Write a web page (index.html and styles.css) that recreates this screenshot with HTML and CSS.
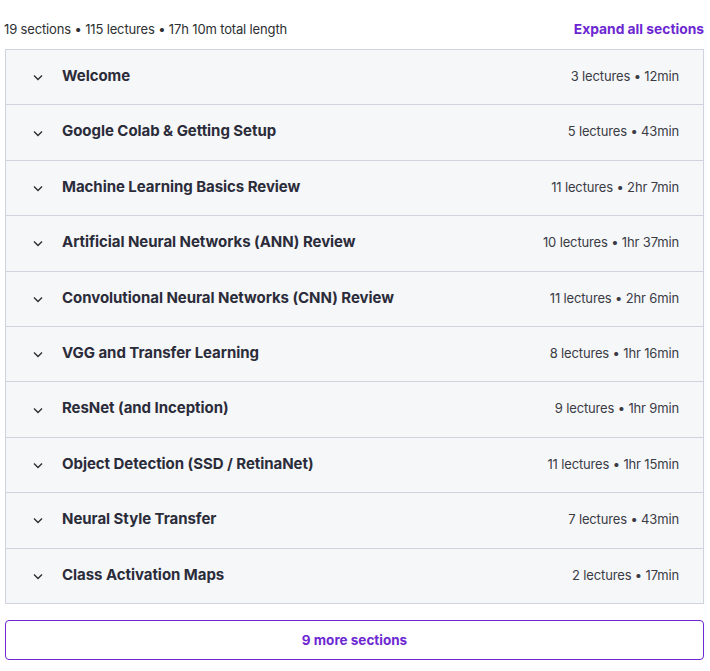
FILE: index.html
```html
<!DOCTYPE html>
<html lang="en">
<head>
<meta charset="utf-8">
<title>Course content</title>
<link rel="stylesheet" href="styles.css">
</head>
<body>
<div class="wrap">
  <div class="header">
    <span class="stats">19 sections • 115 lectures • 17h 10m total length</span>
    <button class="expand">Expand all sections</button>
  </div>
  <div class="panel">
    <div class="row"><svg class="chev" viewBox="0 0 16 16"><path d="M4 6.5l4 4 4-4" /></svg><span class="title">Welcome</span><span class="meta">3 lectures • 12min</span></div>
    <div class="row"><svg class="chev" viewBox="0 0 16 16"><path d="M4 6.5l4 4 4-4" /></svg><span class="title">Google Colab &amp; Getting Setup</span><span class="meta">5 lectures • 43min</span></div>
    <div class="row"><svg class="chev" viewBox="0 0 16 16"><path d="M4 6.5l4 4 4-4" /></svg><span class="title">Machine Learning Basics Review</span><span class="meta">11 lectures • 2hr 7min</span></div>
    <div class="row"><svg class="chev" viewBox="0 0 16 16"><path d="M4 6.5l4 4 4-4" /></svg><span class="title">Artificial Neural Networks (ANN) Review</span><span class="meta">10 lectures • 1hr 37min</span></div>
    <div class="row"><svg class="chev" viewBox="0 0 16 16"><path d="M4 6.5l4 4 4-4" /></svg><span class="title">Convolutional Neural Networks (CNN) Review</span><span class="meta">11 lectures • 2hr 6min</span></div>
    <div class="row"><svg class="chev" viewBox="0 0 16 16"><path d="M4 6.5l4 4 4-4" /></svg><span class="title">VGG and Transfer Learning</span><span class="meta">8 lectures • 1hr 16min</span></div>
    <div class="row"><svg class="chev" viewBox="0 0 16 16"><path d="M4 6.5l4 4 4-4" /></svg><span class="title">ResNet (and Inception)</span><span class="meta">9 lectures • 1hr 9min</span></div>
    <div class="row"><svg class="chev" viewBox="0 0 16 16"><path d="M4 6.5l4 4 4-4" /></svg><span class="title">Object Detection (SSD / RetinaNet)</span><span class="meta">11 lectures • 1hr 15min</span></div>
    <div class="row"><svg class="chev" viewBox="0 0 16 16"><path d="M4 6.5l4 4 4-4" /></svg><span class="title">Neural Style Transfer</span><span class="meta">7 lectures • 43min</span></div>
    <div class="row"><svg class="chev" viewBox="0 0 16 16"><path d="M4 6.5l4 4 4-4" /></svg><span class="title">Class Activation Maps</span><span class="meta">2 lectures • 17min</span></div>
  </div>
  <button class="more">9 more sections</button>
</div>
</body>
</html>
```
FILE: styles.css
```css
* { box-sizing: border-box; }
html, body { margin: 0; padding: 0; background: #fff; }
body {
  font-family: Inter, "Noto Sans", "Liberation Sans", sans-serif;
  color: #2d2f31;
}
.wrap {
  padding: 19px 6px 0 5px;
}
.header {
  display: flex;
  justify-content: space-between;
  align-items: center;
  height: 20px;
  margin-bottom: 10px;
}
.stats {
  font-size: 13px;
  color: #2d2f31;
  margin-left: -1px;
  letter-spacing: -0.15px;
}
.expand {
  border: 0;
  background: none;
  padding: 0;
  font-family: inherit;
  font-weight: 700;
  font-size: 13.8px;
  color: #6d28d2;
}
.panel {
  border: 1px solid #d1d2e0;
  border-bottom: 0;
  background: #f6f7f9;
}
.row {
  display: flex;
  align-items: center;
  padding: 15px 24px 17px 24px;
  line-height: 22.4px;
  border-bottom: 1px solid #d1d2e0;
}
.chev {
  width: 16px;
  height: 16px;
  flex: none;
  margin-right: 16px;
  fill: none;
  stroke: #2d2f31;
  stroke-width: 1.4;
  position: relative;
  top: 1px;
}
.title {
  flex: 1;
  font-weight: 700;
  font-size: 15px;
  letter-spacing: -0.05px;
  color: #2b2c3a;
}
.meta {
  font-size: 13px;
  letter-spacing: -0.15px;
  color: #3a3b45;
}
.more {
  display: block;
  width: 100%;
  height: 40px;
  margin-top: 16px;
  border: 1px solid #6d28d2;
  border-radius: 4px;
  background: #fff;
  font-family: inherit;
  font-weight: 700;
  font-size: 13.5px;
  color: #6d28d2;
}
```
